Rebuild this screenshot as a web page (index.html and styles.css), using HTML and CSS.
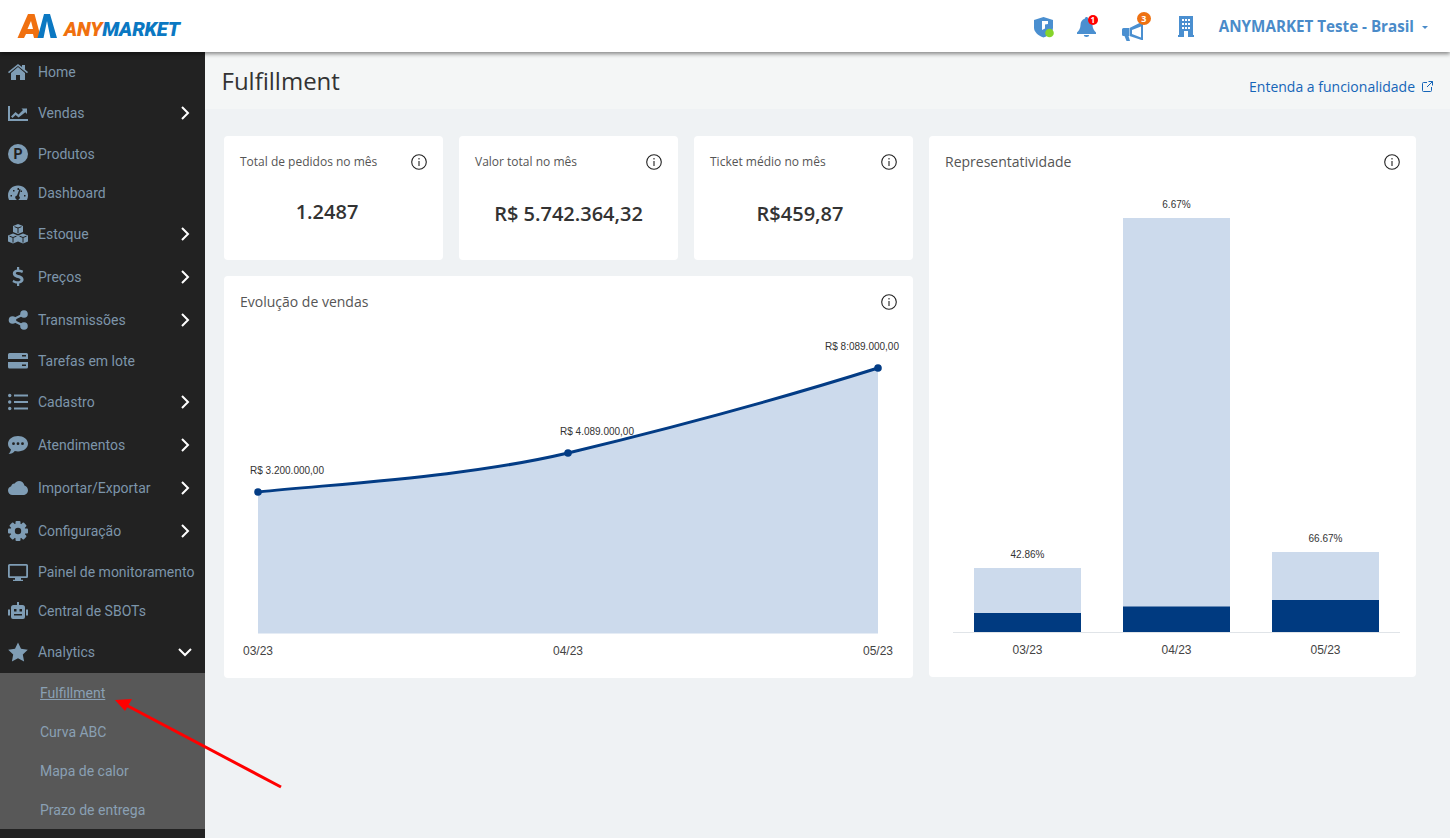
FILE: index.html
```html
<!DOCTYPE html>
<html lang="pt-BR">
<head>
<meta charset="utf-8">
<title>Fulfillment</title>
<link rel="stylesheet" href="styles.css">
</head>
<body>
<header class="topbar">
  <a class="logo">
    <svg width="42" height="26" viewBox="17 13 42 26"><path class="lo" fill-rule="evenodd" d="M17.500 38 28 14h6.500L41 38h-7l-1-4h-7l-2 4zM31 21l-3.500 8h5.500z"/><path class="lb" d="M37.500 38 44 14h6l7 24h-6.500L47 21l-3.500 17z"/></svg>
    <span class="wordmark"><span class="wm-o">ANY</span><span class="wm-b">MARKET</span></span>
  </a>
  <div class="top-actions">
    <span class="ti ti-shield"><svg width="21" height="21" viewBox="0 0 21 21"><path class="tf" d="M9.500 0 19 3v7.500c0 4.500-4 8-9.500 10C4 18.500 0 15 0 10.500V3z"/><path class="tw" d="M8 4h6v3l-3 .5v4L8 13z"/><circle cx="15.500" cy="16" r="4.300" fill="#86d42a"/></svg></span>
    <span class="ti ti-bell"><svg width="19" height="20" viewBox="0 0 19 20"><path class="tf" d="M9.500 0c1 0 1.500.7 1.500 1.500C14 2.300 15.500 5 15.500 8c0 3.500 1.500 5.500 3.500 7.500V17H0v-1.500C2 13.500 3.500 11.500 3.500 8c0-3 1.500-5.700 4.500-6.500C8 .7 8.500 0 9.500 0z"/><path class="tf" d="M6.800 18h5.400a2.700 2 0 0 1-5.400 0z"/></svg><b class="badge badge-red">1</b></span>
    <span class="ti ti-mega"><svg width="22" height="20" viewBox="0 0 22 20"><path class="tf" d="M1.500 7H7v8H1.500A1.500 1.500 0 0 1 0 13.500v-5A1.500 1.500 0 0 1 1.500 7z"/><path class="tf" fill-rule="evenodd" d="M7.500 7 19.500 1H21v18h-1.500L7.500 15zM10 9v4l9 3.500v-11z"/><path class="tf" d="M2.500 15h4l1.500 5H4.500z"/></svg><b class="badge badge-orange">3</b></span>
    <span class="ti ti-build"><svg width="16" height="21" viewBox="0 0 16 21"><path class="tf" fill-rule="evenodd" d="M1 0h14v19h1v2H0v-2h1zM4 3v2h2V3zm3 0v2h2V3zm3 0v2h2V3zM4 7v2h2V7zm3 0v2h2V7zm3 0v2h2V7zM4 11v2h2v-2zm3 0v2h2v-2zm3 0v2h2v-2zM6 15v6h4v-6z"/></svg></span>
    <span class="user">ANYMARKET Teste - Brasil</span>
    <span class="caret"></span>
  </div>
</header>

<div class="app">
  <nav class="sidebar">
    <a class="item"><svg class="ic" viewBox="0 0 20 20"><path d="M10 5 3 11v7h5v-5h4v5h5v-7z"/><path d="M0 10 10 2l4 3V3h3v4.500l3 2.500-1 1.200L10 4 1 11.200z"/></svg><span>Home</span></a>
    <a class="item item-sub"><svg class="ic" viewBox="0 0 20 20"><path d="M0 3h2v13h18v2H0z"/><path d="M3 13.500 7.500 9l3 2.500L15 7l-1.500-1.500H19V11l-1.700-1.700-6.700 5.200-3-2.500L4.500 15z"/></svg><span>Vendas</span><svg class="chev" viewBox="0 0 12 14"><path d="M3 1l6 6-6 6"/></svg></a>
    <a class="item"><svg class="ic" viewBox="0 0 20 20"><circle cx="10" cy="10" r="10"/><text x="10" y="15" class="ic-letter">P</text></svg><span>Produtos</span></a>
    <a class="item"><svg class="ic" viewBox="0 0 20 20"><path fill-rule="evenodd" d="M10 2.500c5.500 0 10 4 10 10 0 1.500-.3 3-1 4.500H1c-.7-1.500-1-3-1-4.500C0 6.500 4.500 2.500 10 2.500zM9.500 5v2h1.500V5zM5 7v1.500h1.500V7zm9 .5-1.500 0 0 1.500h1.500zM2.500 12v1.500H4V12zm13.500 0v1.500h1.500V12zM11.500 6 9 12.500a2.200 2.200 0 1 0 2 .5l1.500-6.800z"/></svg><span>Dashboard</span></a>
    <a class="item item-sub"><svg class="ic" viewBox="0 0 20 20"><path d="M10 0l5 2v6l-5 2-5-2V2z"/><path d="M5 9.500l5 2v6l-5 2-5-2v-6z"/><path d="M15 9.500l5 2v6l-5 2-5-2v-6z"/><path d="M6.500 2.700 10 4l3.500-1.300M10 4v5M1.500 12.200 5 13.500l3.500-1.300M5 13.500v5M11.500 12.200l3.500 1.300 3.500-1.300M15 13.500v5" class="ic-cut"/></svg><span>Estoque</span><svg class="chev" viewBox="0 0 12 14"><path d="M3 1l6 6-6 6"/></svg></a>
    <a class="item item-sub"><svg class="ic" viewBox="0 0 20 20"><path d="M9 0h2.200v2.500c1.700.2 3 .7 4 1.300l-1 2.200c-1.300-.7-2.600-1.100-4-1.100-1.500 0-2.400.5-2.400 1.300 0 2.200 7.800 1.300 7.800 6.300 0 2-1.500 3.500-4.400 3.900V19H9v-2.500c-1.700-.1-3.400-.7-4.600-1.600l1.100-2.200c1.300 1 2.900 1.500 4.400 1.500 1.600 0 2.600-.6 2.600-1.500C12.500 10.500 4.800 11.500 4.800 6.500c0-2 1.600-3.600 4.200-4z"/></svg><span>Preços</span><svg class="chev" viewBox="0 0 12 14"><path d="M3 1l6 6-6 6"/></svg></a>
    <a class="item item-sub"><svg class="ic" viewBox="0 0 20 20"><circle cx="16" cy="4" r="3.800"/><circle cx="16" cy="16" r="3.800"/><circle cx="4.500" cy="10" r="3.800"/><path d="M4 10l12-6M4 10l12 6" class="ic-line"/></svg><span>Transmissões</span><svg class="chev" viewBox="0 0 12 14"><path d="M3 1l6 6-6 6"/></svg></a>
    <a class="item"><svg class="ic" viewBox="0 0 20 20"><path fill-rule="evenodd" d="M1.500 2h17A1.500 1.500 0 0 1 20 3.500V8H0V3.500A1.500 1.500 0 0 1 1.500 2zM14 4v1.500h4V4zM0 11h20v5a1.500 1.500 0 0 1-1.500 1.500h-17A1.500 1.500 0 0 1 0 16zm14 2.500V15h4v-1.500z"/></svg><span>Tarefas em lote</span></a>
    <a class="item item-sub"><svg class="ic" viewBox="0 0 20 20"><circle cx="1.700" cy="3.500" r="1.700"/><circle cx="1.700" cy="10" r="1.700"/><circle cx="1.700" cy="16.500" r="1.700"/><path d="M6 2.500h14v2H6zM6 9h14v2H6zM6 15.500h14v2H6z"/></svg><span>Cadastro</span><svg class="chev" viewBox="0 0 12 14"><path d="M3 1l6 6-6 6"/></svg></a>
    <a class="item item-sub"><svg class="ic" viewBox="0 0 20 20"><path fill-rule="evenodd" d="M10 1c5.500 0 10 3.400 10 7.700s-4.500 7.700-10 7.700c-1.100 0-2.200-.1-3.200-.4C5.500 17.700 3 19 .5 19c1.200-1.200 2.200-2.700 2.500-4.600C1.100 13 0 11 0 8.700 0 4.400 4.500 1 10 1zM5.500 7.300a1.400 1.400 0 1 0 0 2.800 1.400 1.400 0 0 0 0-2.800zm4.500 0a1.400 1.400 0 1 0 0 2.800 1.400 1.400 0 0 0 0-2.800zm4.500 0a1.400 1.400 0 1 0 0 2.800 1.400 1.400 0 0 0 0-2.800z"/></svg><span>Atendimentos</span><svg class="chev" viewBox="0 0 12 14"><path d="M3 1l6 6-6 6"/></svg></a>
    <a class="item item-sub"><svg class="ic" viewBox="0 0 20 20"><path d="M11 3c2.800 0 5 2 5.400 4.500C18.500 8.200 20 10 20 12.200 20 15 17.800 17 15 17H4.500C2 17 0 15 0 12.500c0-2 1.300-3.700 3.200-4.300C3.500 6.500 5 5.300 6.700 5.500 7.700 4 9.200 3 11 3z"/></svg><span>Importar/Exportar</span><svg class="chev" viewBox="0 0 12 14"><path d="M3 1l6 6-6 6"/></svg></a>
    <a class="item item-sub"><svg class="ic" viewBox="0 0 20 20"><rect x="7.500" y="0" width="5" height="20" rx="1"/><rect x="7.500" y="0" width="5" height="20" rx="1" transform="rotate(45 10 10)"/><rect x="7.500" y="0" width="5" height="20" rx="1" transform="rotate(90 10 10)"/><rect x="7.500" y="0" width="5" height="20" rx="1" transform="rotate(135 10 10)"/><circle cx="10" cy="10" r="7.500"/><circle class="ic-hole" cx="10" cy="10" r="3.200"/></svg><span>Configuração</span><svg class="chev" viewBox="0 0 12 14"><path d="M3 1l6 6-6 6"/></svg></a>
    <a class="item"><svg class="ic" viewBox="0 0 20 20"><path fill-rule="evenodd" d="M1.500 2h17A1.500 1.500 0 0 1 20 3.500v11a1.500 1.500 0 0 1-1.500 1.500h-17A1.500 1.500 0 0 1 0 14.500v-11A1.500 1.500 0 0 1 1.500 2zm.3 1.800v10.400h16.400V3.800z"/><path d="M7 16h6v1.800h2V19H5v-1.200h2z"/></svg><span>Painel de monitoramento</span></a>
    <a class="item"><svg class="ic" viewBox="0 0 20 20"><path fill-rule="evenodd" d="M9 1h2v3h3.500A2.500 2.500 0 0 1 17 6.500V16a2 2 0 0 1-2 2H5a2 2 0 0 1-2-2V6.500A2.500 2.500 0 0 1 5.500 4H9zM6 8v2.500h2.500V8zm5.500 0v2.500H14V8zM6 13v1.500h8V13z"/><path d="M0 8.500h2v6H0zM18 8.500h2v6h-2z"/></svg><span>Central de SBOTs</span></a>
    <a class="item item-sub"><svg class="ic" viewBox="0 0 20 20"><path d="M10 .5l3 6.300 6.800 1-5 4.800 1.300 6.900L10 16.200l-6.100 3.300 1.300-6.900-5-4.800 6.800-1z"/></svg><span>Analytics</span><svg class="chev chev-down" viewBox="0 0 14 12"><path d="M1 3l6 6 6-6"/></svg></a>
    <div class="submenu">
      <a class="subitem current">Fulfillment</a>
      <a class="subitem">Curva ABC</a>
      <a class="subitem">Mapa de calor</a>
      <a class="subitem">Prazo de entrega</a>
    </div>
  </nav>

  <main class="main">
    <div class="titlebar">
      <h1>Fulfillment</h1>
      <a class="help">Entenda a funcionalidade <svg width="11" height="11" viewBox="0 0 11 11"><path d="M5 1.500H1.500a1 1 0 0 0-1 1v7a1 1 0 0 0 1 1h7a1 1 0 0 0 1-1V6M6.500.5h4v4M10.500.5 5 6"/></svg></a>
    </div>
    <div class="grid">
      <div class="left">
        <div class="stats">
          <section class="card stat">
            <div class="stat-head"><span>Total de pedidos no mês</span><svg class="info" viewBox="0 0 16 16"><circle cx="8" cy="8" r="7.300"/><path d="M8 7v5M8 4v1.400"/></svg></div>
            <div class="stat-val stat-val-first">1.2487</div>
          </section>
          <section class="card stat">
            <div class="stat-head"><span>Valor total no mês</span><svg class="info" viewBox="0 0 16 16"><circle cx="8" cy="8" r="7.300"/><path d="M8 7v5M8 4v1.400"/></svg></div>
            <div class="stat-val">R$ 5.742.364,32</div>
          </section>
          <section class="card stat">
            <div class="stat-head"><span>Ticket médio no mês</span><svg class="info" viewBox="0 0 16 16"><circle cx="8" cy="8" r="7.300"/><path d="M8 7v5M8 4v1.400"/></svg></div>
            <div class="stat-val stat-val-last">R$459,87</div>
          </section>
        </div>
        <section class="card chart-card">
          <div class="chart-head"><span>Evolução de vendas</span><svg class="info" viewBox="0 0 16 16"><circle cx="8" cy="8" r="7.300"/><path d="M8 7v5M8 4v1.400"/></svg></div>
          <svg class="chart" width="689" height="352" viewBox="224 326 689 352">
            <path class="area" d="M258 492C360 482 470 476 568 453 680 426 770 402 878 368V633.500H258z"/>
            <path class="line" d="M258 492C360 482 470 476 568 453 680 426 770 402 878 368"/>
            <circle class="dot" cx="258" cy="492" r="3.800"/><circle class="dot" cx="568" cy="453" r="3.800"/><circle class="dot" cx="878" cy="368" r="3.800"/>
            <text class="dlabel" x="287" y="474">R$ 3.200.000,00</text>
            <text class="dlabel" x="597" y="435">R$ 4.089.000,00</text>
            <text class="dlabel" x="862" y="350">R$ 8:089.000,00</text>
            <text class="alabel" x="258" y="655">03/23</text>
            <text class="alabel" x="568" y="655">04/23</text>
            <text class="alabel" x="878" y="655">05/23</text>
          </svg>
        </section>
      </div>
      <section class="card chart-card right">
        <div class="chart-head"><span>Representatividade</span><svg class="info" viewBox="0 0 16 16"><circle cx="8" cy="8" r="7.300"/><path d="M8 7v5M8 4v1.400"/></svg></div>
        <svg class="chart" width="487" height="491" viewBox="929 186 487 491">
          <rect class="bar-l" x="974" y="568" width="107" height="65"/><rect class="bar-d" x="974" y="613" width="107" height="20"/>
          <rect class="bar-l" x="1123" y="218" width="107" height="415"/><rect class="bar-d" x="1123" y="606.500" width="107" height="26.500"/>
          <rect class="bar-l" x="1272" y="552" width="107" height="81"/><rect class="bar-d" x="1272" y="600" width="107" height="33"/>
          <path class="axis" d="M953 632.500H1400"/>
          <text class="dlabel" x="1027.500" y="558">42.86%</text>
          <text class="dlabel" x="1176.500" y="208">6.67%</text>
          <text class="dlabel" x="1325.500" y="542">66.67%</text>
          <text class="alabel" x="1027.500" y="654">03/23</text>
          <text class="alabel" x="1176.500" y="654">04/23</text>
          <text class="alabel" x="1325.500" y="654">05/23</text>
        </svg>
      </section>
    </div>
  </main>
</div>

<svg class="arrow" width="180" height="100" viewBox="110 695 180 100"><path d="M281 787 126 705" class="arrow-line"/><path d="M115 700l17-1-7 12z" class="arrow-head"/></svg>
</body>
</html>
```
FILE: styles.css
```css
* { box-sizing: border-box; }
html, body { margin: 0; height: 100%; overflow: hidden; }
body { font-family: "Open Sans", sans-serif; background: #eff2f4; color: #333; display: flex; flex-direction: column; }

.topbar { height: 52px; flex: none; background: #fff; display: flex; align-items: center; justify-content: space-between; padding: 0 22px 0 17px; box-shadow: 0 2px 4px rgba(0,0,0,.45); position: relative; z-index: 2; }
.logo { display: flex; align-items: center; gap: 5px; }
.lo { fill: #f0700f; }
.lb { fill: #0b78c2; }
.wordmark { font: italic 900 20px "Roboto", sans-serif; letter-spacing: -.2px; line-height: 1; margin-top: 5px; }
.wm-o { color: #f0700f; }
.wm-b { color: #0b78c2; }

.top-actions { display: flex; align-items: center; }
.ti { position: relative; display: flex; }
.ti-shield { margin-right: 22px; margin-top: 2px; }
.ti-bell { margin-right: 26px; margin-top: 1px; }
.ti-mega { margin-right: 34px; margin-top: 9px; }
.ti-build { margin-right: 25px; margin-top: 1px; }
.tf { fill: #4a8fd0; }
.tw { fill: #fff; }
.badge { position: absolute; border-radius: 50%; color: #fff; font: 700 8px/1 "Open Sans", sans-serif; display: flex; align-items: center; justify-content: center; }
.badge-red { background: #f00; width: 10px; height: 10px; left: 11px; top: -2px; }
.badge-orange { background: #ee7112; width: 14px; height: 13px; left: 15px; top: -9px; font-size: 9px; }
.user { color: #4a8bc9; font-weight: 700; font-size: 15.2px; }
.caret { margin-left: 8px; margin-top: 2px; border: 3.500px solid transparent; border-top-color: #4a8bc9; border-bottom: 0; }

.app { flex: 1; display: flex; min-height: 0; }
.sidebar { width: 205px; flex: none; background: #222; display: flex; flex-direction: column; font: 14px "Roboto", sans-serif; color: #7d95aa; }
.item { height: 39px; flex: none; display: flex; align-items: center; padding-left: 8px; }
.item-sub { height: 43px; }
.ic { width: 20px; height: 20px; flex: none; margin-right: 10px; fill: #7f9db5; }
.ic-letter { fill: #222; font: 700 14px "Roboto", sans-serif; text-anchor: middle; }
.ic-cut { fill: none; stroke: #222; stroke-width: 1; }
.ic-line { fill: none; stroke: #7f9db5; stroke-width: 2.200; }
.ic-hole { fill: #222; }
.chev { width: 12px; height: 14px; margin-left: auto; margin-right: 14px; fill: none; stroke: #fff; stroke-width: 2; }
.chev-down { width: 14px; height: 12px; margin-right: 13px; }
.submenu { background: #585858; display: flex; flex-direction: column; }
.subitem { height: 39px; display: flex; align-items: center; padding-left: 40px; color: #8aa0b4; }
.current { text-decoration: underline; }

.main { flex: 1; min-width: 0; display: flex; flex-direction: column; }
.titlebar { height: 57px; flex: none; background: #f4f6f6; display: flex; justify-content: space-between; padding: 0 17px 0 16.500px; }
h1 { margin: 12px 0 0; font-size: 24px; font-weight: 400; line-height: 34px; color: #333; }
.help { margin-top: 25px; font-size: 14px; line-height: 20px; color: #1565b8; display: flex; align-items: center; gap: 3px; height: 20px; }
.help svg { fill: none; stroke: #1565b8; stroke-width: 1; margin-left: 4px; margin-top: -2px; }

.grid { display: flex; gap: 16px; padding: 27px 0 0 19px; align-items: flex-start; }
.left { width: 689px; display: flex; flex-direction: column; gap: 16px; }
.stats { display: flex; gap: 16px; }
.card { background: #fff; border-radius: 4px; }
.stat { width: 219px; height: 124px; padding: 16px 16px 0; }
.stat-head { display: flex; justify-content: space-between; align-items: center; font-size: 12px; line-height: 20px; color: #555; height: 20px; }
.info { width: 16px; height: 16px; fill: none; stroke: #222; stroke-width: 1.100; flex: none; }
.stat-val { margin-top: 28px; height: 27px; font-size: 20px; font-weight: 600; line-height: 27px; text-align: center; color: #333; }
.stat-val-first { margin-top: 26px; padding-right: 13px; }
.stat-val-last { padding-right: 7px; }
.chart-card { height: 402px; }
.right { width: 487px; height: 541px; }
.chart-head { height: 52px; margin-bottom: -2px; padding: 0 16px; display: flex; justify-content: space-between; align-items: center; font-size: 14px; color: #555; }
.chart-head span { margin-top: -2px; }
.chart { display: block; }
.area { fill: #ccdaec; }
.line { fill: none; stroke: #033c85; stroke-width: 3; }
.dot { fill: #033c85; }
.dlabel { font: 10px "Liberation Sans", sans-serif; fill: #333; text-anchor: middle; }
.alabel { font: 12px "Liberation Sans", sans-serif; fill: #444; text-anchor: middle; }
.bar-l { fill: #ccdaec; }
.bar-d { fill: #003a80; }
.axis { stroke: #e0e4e8; stroke-width: 1; }

.arrow { position: absolute; left: 110px; top: 695px; z-index: 3; }
.arrow-line { stroke: #f00; stroke-width: 3; fill: none; }
.arrow-head { fill: #f00; }
```
